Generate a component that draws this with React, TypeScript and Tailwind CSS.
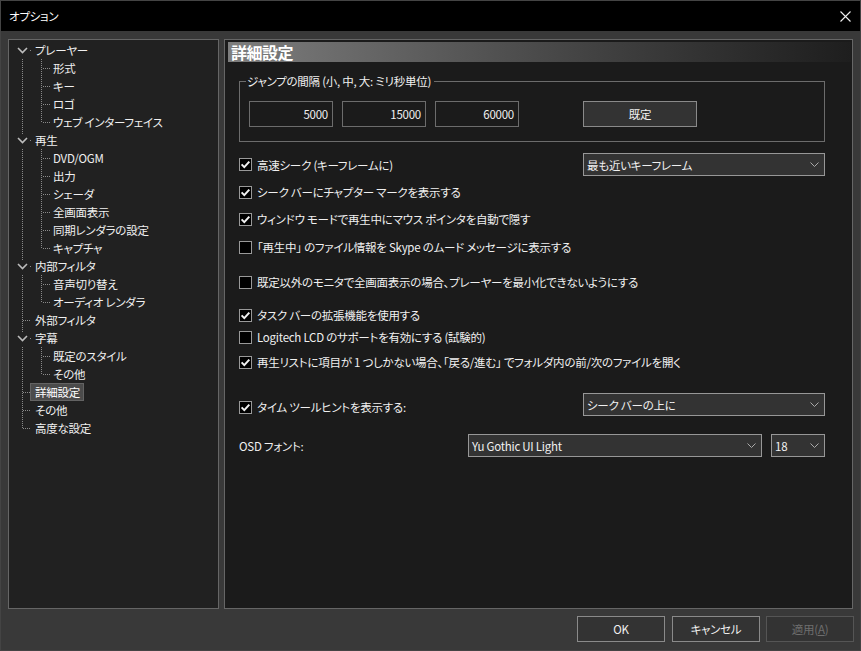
import React from "react";

type Item = {
  label: string;
  level: 1 | 2;
  exp?: boolean;
  first?: boolean;
  lastChild?: boolean;
  lastTop?: boolean;
  selected?: boolean;
};

const items: Item[] = [
  { label: "プレーヤー", level: 1, exp: true, first: true },
  { label: "形式", level: 2 },
  { label: "キー", level: 2 },
  { label: "ロゴ", level: 2 },
  { label: "ウェブ インターフェイス", level: 2, lastChild: true },
  { label: "再生", level: 1, exp: true },
  { label: "DVD/OGM", level: 2 },
  { label: "出力", level: 2 },
  { label: "シェーダ", level: 2 },
  { label: "全画面表示", level: 2 },
  { label: "同期レンダラの設定", level: 2 },
  { label: "キャプチャ", level: 2, lastChild: true },
  { label: "内部フィルタ", level: 1, exp: true },
  { label: "音声切り替え", level: 2 },
  { label: "オーディオ レンダラ", level: 2, lastChild: true },
  { label: "外部フィルタ", level: 1 },
  { label: "字幕", level: 1, exp: true },
  { label: "既定のスタイル", level: 2 },
  { label: "その他", level: 2, lastChild: true },
  { label: "詳細設定", level: 1, selected: true },
  { label: "その他", level: 1 },
  { label: "高度な設定", level: 1, lastTop: true },
];

const DOT = "#8a8a8a";

function TreeRow({ it }: { it: Item }) {
  if (it.level === 2) {
    return (
      <div className="h-[18px] flex items-center">
        <svg width="44" height="18" className="shrink-0" shapeRendering="crispEdges">
          <line x1="13.5" y1="0" x2="13.5" y2="18" stroke={DOT} strokeDasharray="1 1" />
          <line x1="32.5" y1="0" x2="32.5" y2={it.lastChild ? 10 : 18} stroke={DOT} strokeDasharray="1 1" />
          <line x1="34" y1="9.5" x2="42" y2="9.5" stroke={DOT} strokeDasharray="1 1" />
        </svg>
        <span className="whitespace-nowrap">{it.label}</span>
      </div>
    );
  }
  if (it.exp) {
    return (
      <div className="h-[18px] flex items-center">
        <svg width="26" height="18" className="shrink-0">
          {!it.first && (
            <line x1="13.5" y1="0" x2="13.5" y2="4" stroke={DOT} strokeDasharray="1 1" shapeRendering="crispEdges" />
          )}
          <path d="M9 7 L13.5 11.5 L18 7" fill="none" stroke="#bdbdbd" strokeWidth="1.6" />
          <rect x="21" y="9" width="1" height="1" fill={DOT} />
        </svg>
        <span className="whitespace-nowrap">{it.label}</span>
      </div>
    );
  }
  const w = it.selected ? 21 : 26;
  return (
    <div className="h-[18px] flex items-center">
      <svg width={w} height="18" className="shrink-0" shapeRendering="crispEdges">
        <line x1="13.5" y1="0" x2="13.5" y2={it.lastTop ? 10 : 18} stroke={DOT} strokeDasharray="1 1" />
        <line x1="14" y1="9.5" x2={it.selected ? 21 : 22} y2="9.5" stroke={DOT} strokeDasharray="1 1" />
      </svg>
      {it.selected ? (
        <span className="h-[18px] flex items-center pl-[4px] pr-[3px] bg-[#4b4b4b] border border-[#636363] whitespace-nowrap text-white">
          {it.label}
        </span>
      ) : (
        <span className="whitespace-nowrap">{it.label}</span>
      )}
    </div>
  );
}

function Check({ checked }: { checked: boolean }) {
  return (
    <div className="w-[13px] h-[13px] border border-[#999999] bg-black flex items-center justify-center shrink-0">
      {checked && (
        <svg width="11" height="11" viewBox="0 0 11 11">
          <path d="M1.6 5.4 L4.3 8.1 L9.3 2.6" fill="none" stroke="#f2f2f2" strokeWidth="2" />
        </svg>
      )}
    </div>
  );
}

function Chevron() {
  return (
    <svg width="9" height="5" viewBox="0 0 9 5" className="shrink-0">
      <path d="M0.5 0.5 L4.5 4.5 L8.5 0.5" fill="none" stroke="#aaaaaa" strokeWidth="1" />
    </svg>
  );
}

function Select({ text, className }: { text: string; className: string }) {
  return (
    <div
      className={
        "h-[23px] bg-[#333333] border border-[#979797] flex items-center justify-between pl-[3px] pr-[5px] " +
        className
      }
    >
      <span className="whitespace-nowrap">{text}</span>
      <Chevron />
    </div>
  );
}

function CheckRow({ checked, label, className }: { checked: boolean; label: string; className: string }) {
  return (
    <div className={"h-[18px] flex items-center " + className}>
      <Check checked={checked} />
      <span className="ml-[5px] whitespace-nowrap">{label}</span>
    </div>
  );
}

function NumBox({ v }: { v: string }) {
  return (
    <div className="w-[84px] h-[26px] border border-[#6c6c6c] flex items-center justify-end pr-[4px]">
      {v}
    </div>
  );
}

export default function App() {
  return (
    <div className="w-[861px] h-[651px] bg-[#393939] border border-[#444444] flex flex-col text-[11.5px] tracking-[-0.25px] leading-[16px] text-[#f0f0f0] font-['Noto_Sans_CJK_JP',sans-serif] [font-feature-settings:'palt'] overflow-hidden">
      {/* title bar */}
      <div className="h-[30px] bg-black flex items-center pl-[8px] pr-[9px] shrink-0">
        <span className="text-white">オプション</span>
        <svg width="11" height="11" viewBox="0 0 11 11" className="ml-auto">
          <path d="M0.5 0.5 L10.5 10.5 M10.5 0.5 L0.5 10.5" stroke="#f0f0f0" strokeWidth="1.1" />
        </svg>
      </div>

      {/* body */}
      <div className="flex px-[7px] pt-[8px]">
        {/* tree */}
        <div className="w-[211px] h-[570px] border border-[#666666] bg-[#212121] pt-[1px] shrink-0">
          {items.map((it, i) => (
            <TreeRow key={i} it={it} />
          ))}
        </div>

        {/* right panel */}
        <div className="ml-[5px] w-[629px] h-[570px] border border-[#666666] bg-[#1b1b1b] shrink-0">
          <div className="mt-[2px] ml-[3px] mr-[1px] h-[20px] bg-gradient-to-r from-[#7e7e7e] via-[#4a4a4a] to-[#1e1e1e] flex items-center pl-[3px]">
            <span className="text-[16px] font-bold text-white leading-[20px] tracking-[-0.5px]">詳細設定</span>
          </div>

          <div className="pl-[14px] w-[600px]">
            {/* group box */}
            <div className="relative mt-[19px] w-[586px] h-[61px] border border-[#6c6c6c]">
              <span className="absolute -top-[9px] left-[6px] bg-[#1b1b1b] pl-[1px] pr-[3px] whitespace-nowrap">
                ジャンプの間隔 (小, 中, 大: ミリ秒単位)
              </span>
              <div className="flex items-center mt-[19px] ml-[9px] gap-[9px]">
                <NumBox v="5000" />
                <NumBox v="15000" />
                <NumBox v="60000" />
                <div className="ml-[55px] w-[114px] h-[26px] bg-[#333333] border border-[#8a8a8a] flex items-center justify-center">
                  既定
                </div>
              </div>
            </div>

            {/* row 1 */}
            <div className="mt-[11px] h-[23px] w-[586px] flex items-center">
              <Check checked />
              <span className="ml-[5px] whitespace-nowrap">高速シーク (キーフレームに)</span>
              <Select text="最も近いキーフレーム" className="ml-auto w-[242px]" />
            </div>

            <CheckRow checked label="シーク バーにチャプター マークを表示する" className="mt-[7px]" />
            <CheckRow checked label="ウィンドウ モードで再生中にマウス ポインタを自動で隠す" className="mt-[9px]" />
            <CheckRow checked={false} label="「再生中」 のファイル情報を Skype のムード メッセージに表示する" className="mt-[10px]" />
            <CheckRow checked={false} label="既定以外のモニタで全画面表示の場合、プレーヤーを最小化できないようにする" className="mt-[17px]" />
            <CheckRow checked label="タスク バーの拡張機能を使用する" className="mt-[15px]" />
            <CheckRow checked={false} label="Logitech LCD のサポートを有効にする (試験的)" className="mt-[4px]" />
            <CheckRow checked label="再生リストに項目が 1 つしかない場合、「戻る/進む」 でフォルダ内の前/次のファイルを開く" className="mt-[7px]" />

            {/* time tooltip row */}
            <div className="mt-[22px] h-[23px] w-[586px] flex items-start">
              <CheckRow checked label="タイム ツールヒントを表示する:" className="mt-[5px]" />
              <Select text="シーク バーの上に" className="ml-auto w-[242px]" />
            </div>

            {/* OSD font row */}
            <div className="mt-[18px] h-[23px] w-[586px] flex items-center">
              <span className="w-[229px] whitespace-nowrap">OSD フォント:</span>
              <Select text="Yu Gothic UI Light" className="w-[294px]" />
              <Select text="18" className="ml-[9px] w-[54px]" />
            </div>
          </div>
        </div>
      </div>

      {/* buttons */}
      <div className="flex justify-end pr-[6px] mt-[7px]">
        <div className="w-[88px] h-[26px] bg-[#333333] border border-[#8a8a8a] flex items-center justify-center">OK</div>
        <div className="ml-[7px] w-[88px] h-[26px] bg-[#333333] border border-[#8a8a8a] flex items-center justify-center">キャンセル</div>
        <div className="ml-[6px] w-[88px] h-[26px] bg-[#333333] border border-[#555555] flex items-center justify-center text-[#6e6e6e]">
          適用(<span className="underline">A</span>)
        </div>
      </div>
    </div>
  );
}
